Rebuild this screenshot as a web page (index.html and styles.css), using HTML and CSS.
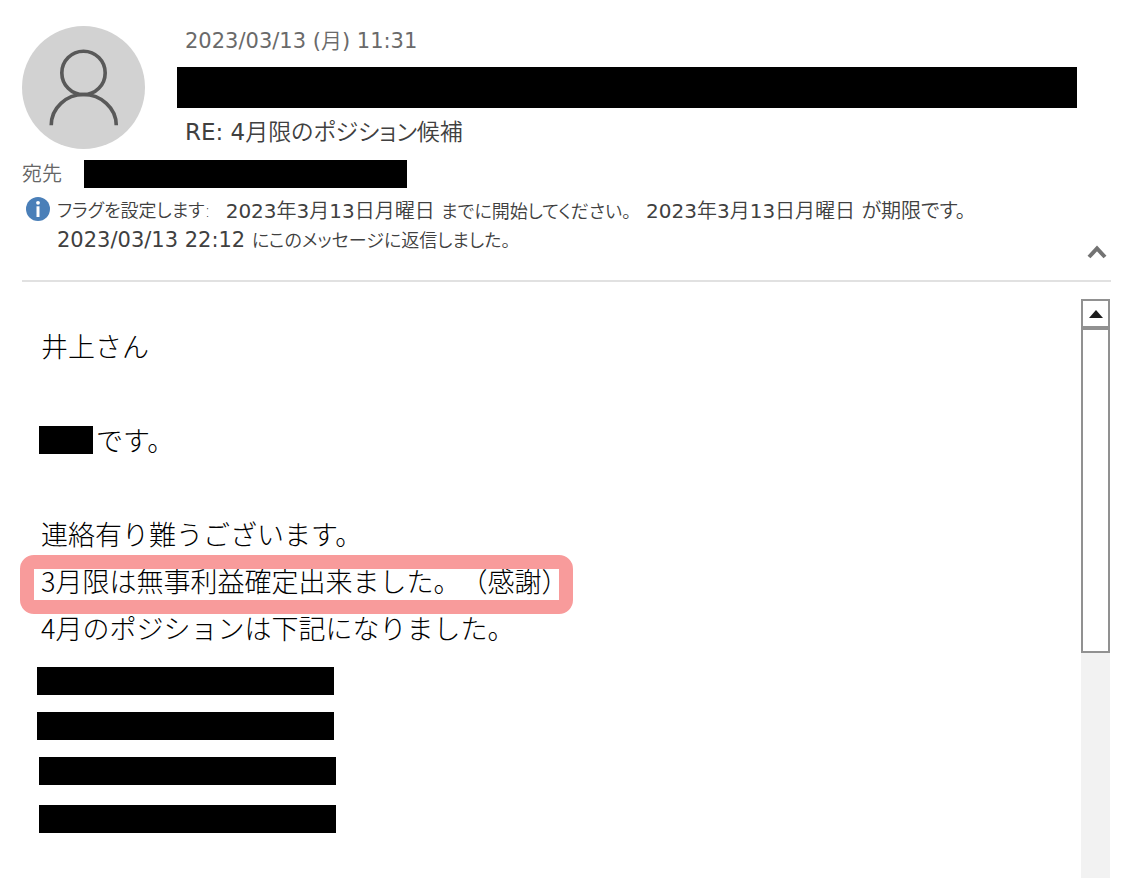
FILE: index.html
```html
<!DOCTYPE html>
<html lang="ja">
<head>
<meta charset="utf-8">
<title>RE: 4月限のポジション候補</title>
<link rel="stylesheet" href="styles.css">
</head>
<body>
<main class="message">
  <header class="head">
    <div class="sender">
      <svg class="avatar" viewBox="0 0 122 122" aria-hidden="true">
        <circle cx="61" cy="61" r="61" fill="#d2d2d2"/>
        <circle cx="61" cy="46.500" r="21.5" fill="none" stroke="#595959" stroke-width="3.6"/>
        <path d="M29 98.500C29 81 44 68 61 68S93.500 81 93.500 98.500" fill="none" stroke="#595959" stroke-width="3.6"/>
      </svg>
      <div class="summary">
        <time class="date" datetime="2023-03-13T11:31"><span class="latin">2023/03/13 (</span>月<span class="latin">) 11:31</span></time>
        <div class="redacted redacted-sender"></div>
        <h1 class="subject"><span class="latin">RE: 4</span>月限のポジション候補</h1>
      </div>
    </div>
    <div class="recipient">
      <span class="label">宛先</span>
      <span class="redacted redacted-to"></span>
    </div>
    <div class="info">
      <svg class="info-icon" viewBox="0 0 24 24" aria-hidden="true">
        <circle cx="12" cy="12" r="12" fill="#4a7fb8"/>
        <circle cx="12" cy="5.800" r="1.900" fill="#fff"/>
        <path d="M10.500 9.300h3V20h-3z" fill="#fff"/>
      </svg>
      <div class="info-text">
        <p class="flag"><span class="kana">フラグを設定します:</span><span><span class="latin">2023</span>年<span class="latin">3</span>月<span class="latin">13</span>日月曜日 <span class="kana">までに開始してください。</span></span><span><span class="latin">2023</span>年<span class="latin">3</span>月<span class="latin">13</span>日月曜日 が期限です。</span></p>
        <p class="replied"><span class="latin">2023/03/13 22:12 </span><span class="kana">にこのメッセージに返信しました。</span></p>
      </div>
    </div>
    <button class="collapse" type="button" aria-label="折りたたむ">
      <svg viewBox="0 0 20 14" width="20" height="14"><path d="M2 12L10 3.500L18 12" fill="none" stroke="#737373" stroke-width="4"/></svg>
    </button>
  </header>
  <div class="content">
    <article class="body">
      <p>井上さん</p>
      <p class="spaced name-line"><span class="redacted redacted-name"></span>です。</p>
      <p class="spaced">連絡有り難うございます。</p>
      <p class="marked">3月限は無事利益確定出来ました。（感謝）</p>
      <p>4月のポジションは下記になりました。</p>
      <div class="positions">
        <div class="redacted position"></div>
        <div class="redacted position"></div>
        <div class="redacted position indented"></div>
        <div class="redacted position indented last"></div>
      </div>
    </article>
    <div class="scrollbar">
      <button class="scroll-up" type="button" aria-label="上へスクロール">
        <svg viewBox="0 0 14 8" width="14" height="8"><path d="M0 8L7 0L14 8z" fill="#1c1c1c"/></svg>
      </button>
      <div class="thumb"></div>
    </div>
  </div>
</main>
</body>
</html>
```
FILE: styles.css
```css
* { box-sizing: border-box; }
body {
  margin: 0;
  background: #fff;
  color: #404040;
  font-family: "DejaVu Sans", "Noto Sans CJK JP", sans-serif;
  font-weight: 350;
}
p, h1 { margin: 0; font-weight: inherit; }
.latin { font-weight: 400; }
.kana { font-size: 18px; }
.redacted { background: #000; display: block; }
.message { display: flex; flex-direction: column; min-height: 100vh; }
.head {
  position: relative;
  margin: 0 15px 0 22px;
  padding: 26px 0 25px;
  border-bottom: 2px solid #e1e1e1;
  font-feature-settings: "palt";
}
.sender { display: flex; gap: 32px; }
.avatar { width: 123px; height: 123px; flex: none; }
.summary { flex: 1; margin-right: 34px; }
.date { display: block; padding-left: 8px; font-size: 21px; line-height: 30px; color: #6a6a6a; }
.redacted-sender { height: 41px; margin-top: 11px; }
.subject { padding-left: 8px; margin-top: 8px; font-size: 23px; line-height: 32px; }
.recipient { display: flex; align-items: center; gap: 22px; margin-top: 11px; }
.label { font-size: 20px; line-height: 28px; color: #666; }
.redacted-to { width: 323px; height: 28px; }
.info { display: flex; gap: 7px; padding-left: 4px; margin-top: 9px; }
.info-icon { width: 24px; height: 24px; flex: none; }
.info-text { font-size: 20px; line-height: 28px; }
.flag { display: flex; gap: 15px; white-space: nowrap; }
.replied { font-size: 21px; }
.collapse {
  position: absolute;
  right: 4px;
  bottom: 21px;
  padding: 0;
  border: 0;
  background: none;
  line-height: 0;
}
.content { display: flex; flex: 1; padding: 17px 16px 0 0; }
.body {
  flex: 1;
  padding: 23px 0 0 41px;
  color: #000;
  font: 300 27px/47px "Noto Sans CJK JP", sans-serif;
  text-spacing-trim: space-all;
}
.spaced { margin-top: 47px; }
.name-line { display: flex; align-items: center; gap: 3px; margin-left: -2px; }
.redacted-name { width: 54px; height: 28px; }
.marked { position: relative; width: fit-content; }
.marked::after {
  content: "";
  position: absolute;
  inset: -2px -5px -10px -21px;
  border: 14px solid #f89b9b;
  border-radius: 14px;
}
.positions { margin: 16px 0 0 -4px; }
.position { width: 297px; height: 28px; margin-bottom: 17px; }
.indented { margin-left: 2px; }
.last { margin-top: 20px; margin-bottom: 0; }
.scrollbar { width: 29px; background: #f2f2f2; }
.scroll-up {
  display: flex;
  align-items: center;
  justify-content: center;
  width: 100%;
  height: 29px;
  padding: 0;
  border: 2px solid #919191;
  background: #fff;
}
.thumb { height: 325px; border: 2px solid #919191; background: #fff; }
```
